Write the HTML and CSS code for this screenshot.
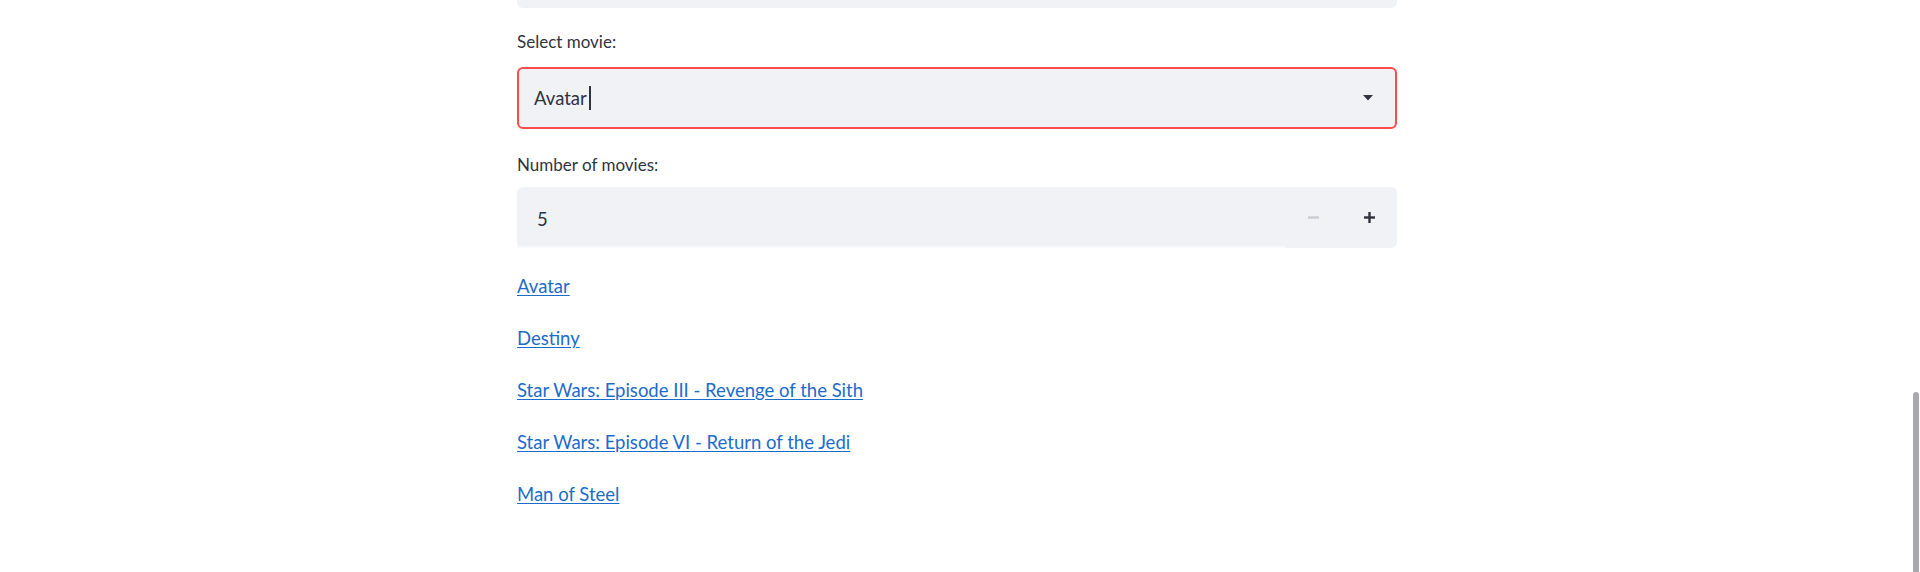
FILE: index.html
```html
<!DOCTYPE html>
<html>
<head>
<meta charset="utf-8">
<link rel="stylesheet" href="styles.css">
</head>
<body>
<div class="page">
  <main class="main">
    <div class="topbox"></div>
    <div class="field field-select">
      <label class="label">Select movie:</label>
      <div class="select">
        <span class="value">Avatar</span><span class="caret"></span>
        <svg class="arrow" width="10" height="6" viewBox="0 0 10 6"><path d="M0 0H10L5 5.5Z" fill="#31333f"/></svg>
      </div>
    </div>
    <div class="field field-number">
      <label class="label">Number of movies:</label>
      <div class="number">
        <div class="num-input"><span class="value">5</span></div>
        <div class="num-btn minus"><svg width="11" height="3" viewBox="0 0 11 3"><rect width="11" height="2.4" y="0.3" fill="#c9ccd4"/></svg></div>
        <div class="num-btn plus"><svg width="11" height="11" viewBox="0 0 11 11"><rect x="0" y="4.3" width="11" height="2.4" fill="#31333f"/><rect x="4.3" y="0" width="2.4" height="11" fill="#31333f"/></svg></div>
      </div>
    </div>
    <ul class="links">
      <li><a href="#">Avatar</a></li>
      <li><a href="#">Destiny</a></li>
      <li><a href="#">Star Wars: Episode III - Revenge of the Sith</a></li>
      <li><a href="#">Star Wars: Episode VI - Return of the Jedi</a></li>
      <li><a href="#">Man of Steel</a></li>
    </ul>
  </main>
  <div class="scrollbar"></div>
</div>
</body>
</html>
```

FILE: styles.css
```css
html, body {
  margin: 0;
  padding: 0;
  background: #ffffff;
  overflow: hidden;
}
body {
  font-family: Lato, "Noto Sans", sans-serif;
  color: #31333f;
}
.page {
  position: relative;
  width: 1920px;
  height: 572px;
}
.main {
  width: 880px;
  margin-left: 517px;
  display: flex;
  flex-direction: column;
}
.topbox {
  height: 8px;
  background: #f0f2f6;
  border-radius: 0 0 6px 6px;
}
.field {
  display: flex;
  flex-direction: column;
}
.label {
  font-size: 17px;
  line-height: 22px;
  height: 22px;
  color: #31333f;
}
.field-select {
  margin-top: 23px;
}
.field-select .label {
  margin-bottom: 14px;
}
.select {
  height: 62px;
  box-sizing: border-box;
  border: 2px solid #ff4b4b;
  border-radius: 6px;
  background: #f0f2f6;
  display: flex;
  align-items: center;
  padding: 0 22px 0 15px;
}
.value {
  font-size: 18.5px;
  color: #31333f;
}
.caret {
  width: 2px;
  height: 24px;
  background: #31333f;
  margin-left: 2px;
}
.arrow {
  margin-left: auto;
}
.field-number {
  margin-top: 25px;
}
.field-number .label {
  margin-bottom: 11px;
}
.number {
  height: 61px;
  display: flex;
  background: #f0f2f6;
  border-radius: 6px;
}
.num-input {
  flex: 1;
  display: flex;
  align-items: center;
  padding-left: 20px;
  padding-top: 2px;
  box-shadow: inset 0 -2px 0 #f8f9fb;
}
.num-btn {
  width: 56px;
  display: flex;
  align-items: center;
  justify-content: center;
}
.links {
  list-style: none;
  margin: 24px 0 0 0;
  padding: 0;
  display: flex;
  flex-direction: column;
  gap: 24px;
}
.links li {
  font-size: 18.5px;
  line-height: 28px;
}
.links a {
  color: #1c6ccb;
  text-decoration: underline;
  text-underline-offset: 2px;
}
.scrollbar {
  position: absolute;
  right: 1px;
  top: 392px;
  width: 6px;
  height: 190px;
  background: #a8a8ae;
  border-radius: 3px;
}
```
